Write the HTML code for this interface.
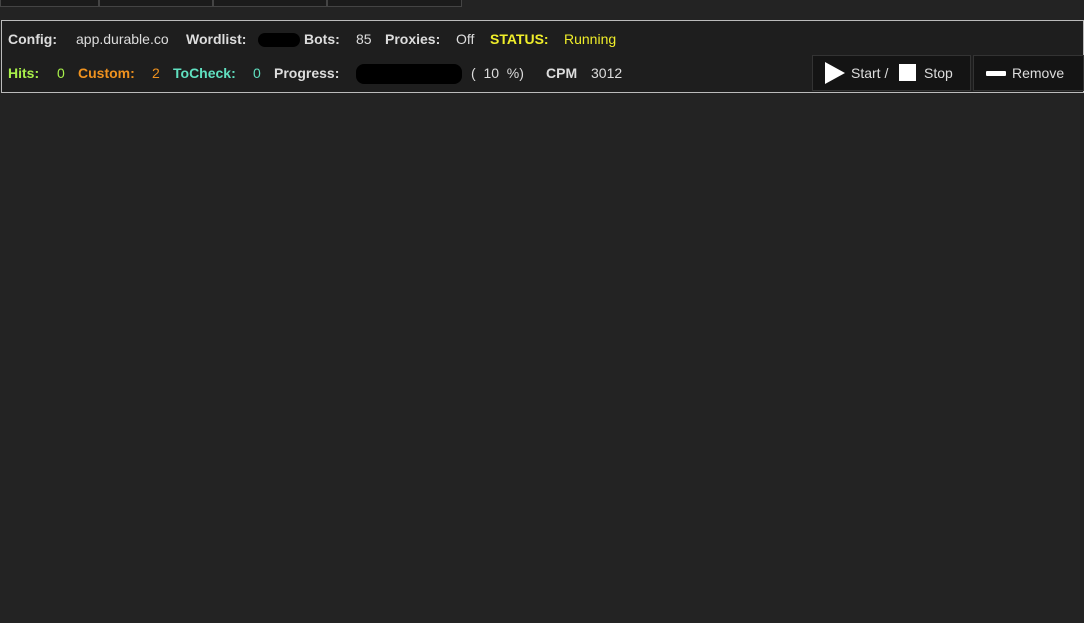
<!DOCTYPE html>
<html><head><style>
body{margin:0;width:1084px;height:623px;background:#232323;position:relative;overflow:hidden;font-family:"Liberation Sans",sans-serif;font-size:14px;color:#ddd}
.t{position:absolute;top:0;height:6px;background:#1b1b1b;border:1px solid #444;border-top:none}
.p{position:absolute;left:1px;top:20px;width:1081px;height:71px;border:1px solid #bbb;background:#1e1e1e}
.s{position:absolute;white-space:nowrap;line-height:16px}
b{font-weight:bold}
.blob{position:absolute;background:#000;border-radius:8px}
.btn{position:absolute;top:34px;height:34px;background:#141414;border:1px solid #333;color:#ddd}
</style></head><body>
<div class="t" style="left:0;width:97px"></div>
<div class="t" style="left:99px;width:112px"></div>
<div class="t" style="left:213px;width:112px"></div>
<div class="t" style="left:327px;width:133px"></div>
<div class="p">
<div class="s" style="left:6px;top:10px"><b>Config:</b></div>
<div class="s" style="left:74px;top:10px">app.durable.co</div>
<div class="s" style="left:184px;top:10px"><b>Wordlist:</b></div>
<div class="blob" style="left:256px;top:12px;width:42px;height:14px"></div>
<div class="s" style="left:302px;top:10px"><b>Bots:</b></div>
<div class="s" style="left:354px;top:10px">85</div>
<div class="s" style="left:383px;top:10px"><b>Proxies:</b></div>
<div class="s" style="left:454px;top:10px">Off</div>
<div class="s" style="left:488px;top:10px;color:#f0ee2a"><b>STATUS:</b></div>
<div class="s" style="left:562px;top:10px;color:#f0ee2a">Running</div>
<div class="s" style="left:6px;top:44px;color:#a8f04a"><b>Hits:</b></div>
<div class="s" style="left:55px;top:44px;color:#a8f04a">0</div>
<div class="s" style="left:76px;top:44px;color:#f0921e"><b>Custom:</b></div>
<div class="s" style="left:150px;top:44px;color:#f0921e">2</div>
<div class="s" style="left:171px;top:44px;color:#60e0c0"><b>ToCheck:</b></div>
<div class="s" style="left:251px;top:44px;color:#60e0c0">0</div>
<div class="s" style="left:272px;top:44px"><b>Progress:</b></div>
<div class="blob" style="left:354px;top:43px;width:106px;height:20px"></div>
<div class="s" style="left:469px;top:44px">(&nbsp; 10 &nbsp;%)</div>
<div class="s" style="left:544px;top:44px"><b>CPM</b></div>
<div class="s" style="left:589px;top:44px">3012</div>
<div class="btn" style="left:810px;width:157px">
<svg style="position:absolute;left:12px;top:6px" width="20" height="22"><polygon points="0,0 20,11 0,22" fill="#fff"/></svg>
<span class="s" style="left:38px;top:9px">Start /</span>
<div style="position:absolute;left:86px;top:8px;width:17px;height:17px;background:#fff"></div>
<span class="s" style="left:111px;top:9px">Stop</span>
</div>
<div class="btn" style="left:971px;width:109px">
<div style="position:absolute;left:12px;top:15px;width:20px;height:5px;background:#fff;border-radius:1px"></div>
<span class="s" style="left:38px;top:9px">Remove</span>
</div>
</div>
</body></html>
